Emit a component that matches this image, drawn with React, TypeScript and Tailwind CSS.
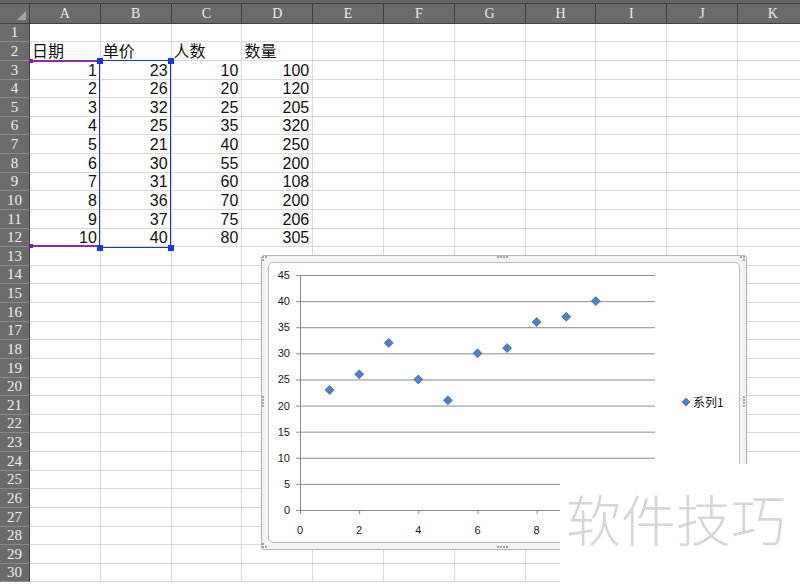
import React from "react";

const cols = ["A", "B", "C", "D", "E", "F", "G", "H", "I", "J", "K"];
const heads = ["日期", "单价", "人数", "数量"];
const price = [23, 26, 32, 25, 21, 30, 31, 36, 37, 40];
const people = [10, 20, 25, 35, 40, 55, 60, 70, 75, 80];
const qty = [100, 120, 205, 320, 250, 200, 108, 200, 206, 305];

const sans = { fontFamily: '"Liberation Sans", "Noto Sans CJK SC", sans-serif' };

function cellText(row: number, col: number) {
  if (row === 2 && col < 4) return { text: heads[col], left: true };
  if (row >= 3 && row <= 12) {
    const i = row - 3;
    const vals = [i + 1, price[i], people[i], qty[i]];
    if (col < 4) return { text: String(vals[col]), left: false };
  }
  return null;
}

// plot scale: x 0..12 -> 300..655, y 0..45 -> 510..275
const px = (x: number) => 300 + x * (355 / 12);
const py = (y: number) => 510 - y * (235 / 45);

function Diamond({ x, y, r = 4.5 }: { x: number; y: number; r?: number }) {
  return (
    <polygon
      points={`${x},${y - r} ${x + r},${y} ${x},${y + r} ${x - r},${y}`}
      fill="#4f81bd"
      stroke="#3f6fa8"
      strokeWidth={0.8}
    />
  );
}

// little dotted grips around the chart frame (frame-local coords, 486x295)
function Grips() {
  const dots: [number, number][] = [];
  for (let k = 0; k < 4; k++) {
    dots.push([236 + k * 3, 1], [236 + k * 3, 291], [1, 141 + k * 3], [482, 141 + k * 3]);
  }
  dots.push([1, 1], [4, 1], [1, 4], [482, 1], [479, 1], [482, 4], [1, 291], [4, 291], [1, 288]);
  return (
    <svg className="absolute inset-[-1px] pointer-events-none" width={486} height={295}>
      {dots.map(([x, y], i) => (
        <rect key={i} x={x} y={y} width={2} height={2} fill="#a6a6a6" />
      ))}
    </svg>
  );
}

function Chart() {
  const yTicks = [0, 5, 10, 15, 20, 25, 30, 35, 40, 45];
  const xTicks = [0, 2, 4, 6, 8, 10, 12];
  return (
    <div className="absolute left-[261px] top-[255px] w-[486px] h-[295px] rounded-[3px] border border-[#b4b4b4] bg-[#f3f3f3] p-[6px]">
      <div className="relative w-full h-full rounded-[5px] border border-[#bcbcbc] bg-white">
        <svg className="absolute inset-0" width={470} height={279} viewBox="269 263 470 279" style={sans}>
          {yTicks.map((v) => (
            <g key={v}>
              <line x1={300} x2={655} y1={py(v) + 0.5} y2={py(v) + 0.5} stroke="#8a8a8a" strokeWidth={1} />
              <line x1={296} x2={300} y1={py(v) + 0.5} y2={py(v) + 0.5} stroke="#8a8a8a" strokeWidth={1} />
              <text x={290} y={py(v) + 4} fontSize={11} textAnchor="end" fill="#1a1a1a">
                {v}
              </text>
            </g>
          ))}
          <line x1={300.5} x2={300.5} y1={py(45)} y2={py(0) + 1} stroke="#8a8a8a" strokeWidth={1} />
          {xTicks.map((v) => (
            <g key={v}>
              <line x1={px(v) + 0.5} x2={px(v) + 0.5} y1={510} y2={514} stroke="#8a8a8a" strokeWidth={1} />
              {v <= 8 && (
                <text x={px(v)} y={534} fontSize={11} textAnchor="middle" fill="#1a1a1a">
                  {v}
                </text>
              )}
            </g>
          ))}
          {price.map((p, i) => (
            <Diamond key={i} x={px(i + 1)} y={py(p)} />
          ))}
          <Diamond x={686} y={402} r={4} />
          <text x={693} y={406.5} fontSize={12} fill="#111" style={{ fontFamily: '"Noto Sans CJK SC", sans-serif' }}>
            系列1
          </text>
        </svg>
      </div>
      <Grips />
    </div>
  );
}

export default function App() {
  const rows = Array.from({ length: 30 }, (_, i) => i + 1);
  return (
    <div className="relative w-[800px] h-[584px] overflow-hidden bg-white">
      {/* top bar */}
      <div className="h-[4px] bg-[#666666] border-b border-[#3c3c3c]" />
      {/* column header */}
      <div className="flex h-[19.7px] bg-[#6b6b6b] border-b border-[#3f3f3f]">
        <div className="w-[30px] shrink-0 border-r border-[#3f3f3f] flex items-end justify-end p-[3px]">
          <div className="w-0 h-0 border-l-[9px] border-l-transparent border-b-[9px] border-b-[#a5a5a5]" />
        </div>
        {cols.map((c) => (
          <div
            key={c}
            className="w-[70.8px] shrink-0 border-r border-[#404040] flex items-center justify-center text-[14px] text-[#ececec]"
            style={{ fontFamily: '"Liberation Serif", serif' }}
          >
            {c}
          </div>
        ))}
      </div>
      {/* rows */}
      {rows.map((r) => (
        <div key={r} className="flex h-[18.63px]">
          <div
            className="w-[30px] shrink-0 bg-[#6b6b6b] border-b border-r border-[#8a8a8a] border-r-[#3f3f3f] flex items-center justify-center text-[15px] text-[#ededed]"
            style={{ fontFamily: '"Liberation Serif", serif' }}
          >
            {r}
          </div>
          {cols.map((c, ci) => {
            const t = cellText(r, ci);
            return (
              <div
                key={c}
                className={`w-[70.8px] shrink-0 border-r border-b border-[#d9d9d9] flex items-end text-[16px] leading-[16px] text-[#111] whitespace-nowrap ${
                  t && t.left ? "justify-start pl-[2px]" : "justify-end pr-[3px]"
                }`}
                style={sans}
              >
                {t ? t.text : ""}
              </div>
            );
          })}
        </div>
      ))}

      {/* data range highlights: category (purple) and values (blue) */}
      <div className="absolute left-[29px] top-[59px] w-[71px] h-[189px] flex flex-col justify-between">
        <div className="flex items-center h-[4px]">
          <span className="w-[4px] h-[4px] bg-[#7a1f9a]" />
          <span className="flex-1 h-[2px] bg-[#8e2aa8]" />
        </div>
        <div className="flex items-center h-[4px]">
          <span className="w-[4px] h-[4px] bg-[#7a1f9a]" />
          <span className="flex-1 h-[2px] bg-[#8e2aa8]" />
        </div>
      </div>
      <div className="absolute left-[99px] top-[60px] w-[72px] h-[188px] border-[1.5px] border-[#2330b8]">
        <div className="absolute inset-[-3.5px] flex flex-col justify-between">
          <div className="flex justify-between">
            <span className="w-[6px] h-[6px] bg-[#1d35e8]" />
            <span className="w-[6px] h-[6px] bg-[#1d35e8]" />
          </div>
          <div className="flex justify-between">
            <span className="w-[6px] h-[6px] bg-[#1d35e8]" />
            <span className="w-[6px] h-[6px] bg-[#1d35e8]" />
          </div>
        </div>
      </div>

      <Chart />

      {/* watermark */}
      <div className="absolute left-[560px] top-[464px] right-0 bottom-0 bg-white pl-[6px] pt-[26px]">
        <div
          className="text-[55px] leading-none text-[#d6d6d6] whitespace-nowrap"
          style={{ fontFamily: '"Noto Sans CJK SC", sans-serif', fontWeight: 300 }}
        >
          软件技巧
        </div>
      </div>
    </div>
  );
}
